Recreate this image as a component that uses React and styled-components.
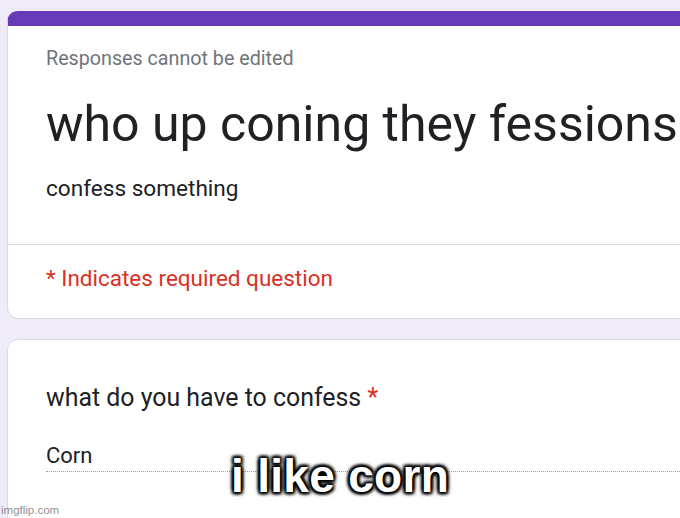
import React from "react";
import styled, { createGlobalStyle } from "styled-components";

const Global = createGlobalStyle`
  html, body {
    margin: 0;
    padding: 0;
    background: #f0ebf8;
  }
  body {
    font-family: Roboto, "Noto Sans", Arial, sans-serif;
  }
`;

const Page = styled.div`
  position: relative;
  width: 680px;
  height: 518px;
  overflow: hidden;
  background: #f0ebf8;
  padding: 11px 0 0 7px;
  box-sizing: border-box;
  display: flex;
  flex-direction: column;
  gap: 20px;
`;

const Card = styled.div`
  width: 720px;
  flex-shrink: 0;
  background: #fff;
  border: 1px solid #dadce0;
  border-radius: 11px;
  box-sizing: border-box;
  ${({ accent }) => accent && `
    border-top: 15px solid #673ab7;
  `}
  ${({ open }) => open && `
    padding-bottom: 80px;
  `}
`;

const Section = styled.div`
  padding: ${({ pad }) => pad || "0 0 0 38px"};
  border-bottom: ${({ divided }) => (divided ? "1px solid #dadce0" : "none")};
`;

const Note = styled.div`
  font-size: 19.7px;
  color: #70757a;
  line-height: 24px;
`;

const Title = styled.h1`
  margin: 0;
  font-size: 50px;
  font-weight: 400;
  color: #202124;
  line-height: 60px;
  white-space: nowrap;
`;

const Desc = styled.div`
  font-size: 22.6px;
  color: #202124;
  line-height: 30px;
`;

const Required = styled.div`
  font-size: 22.5px;
  color: #d93025;
  line-height: 30px;
`;

const Question = styled.div`
  font-size: 24.9px;
  color: #202124;
  line-height: 32px;
`;

const Star = styled.span`
  color: #d93025;
`;

const Answer = styled.div`
  font-size: 22px;
  color: #202124;
  line-height: 30px;
  padding-bottom: 0;
  border-bottom: 1px dotted #9aa0a6;
`;

const Caption = styled.div`
  position: absolute;
  left: 231px;
  top: 448px;
  font-family: "Liberation Sans", Arial, sans-serif;
  font-weight: 700;
  font-size: 46px;
  line-height: 56px;
  color: #fff;
  letter-spacing: 0.3px;
  text-shadow:
    2px 2px 3px #000, -2px -2px 3px #000, 2px -2px 3px #000, -2px 2px 3px #000,
    0 0 4px #000, 0 0 6px rgba(0, 0, 0, 0.6);
`;

const Watermark = styled.div`
  position: absolute;
  left: 1px;
  bottom: 2px;
  font-family: "Liberation Sans", Arial, sans-serif;
  font-size: 11.5px;
  color: rgba(120, 120, 120, 0.85);
`;

export default function App() {
  return (
    <>
      <Global />
      <Page>
        <Card accent>
          <Section pad="21px 0 0 38px">
            <Note>Responses cannot be edited</Note>
          </Section>
          <Section pad="23px 0 0 38px">
            <Title>who up coning they fessions</Title>
          </Section>
          <Section pad="20px 0 40px 38px" divided>
            <Desc>confess something</Desc>
          </Section>
          <Section pad="18px 0 25px 38px">
            <Required>* Indicates required question</Required>
          </Section>
        </Card>
        <Card open>
          <Section pad="42px 0 0 38px">
            <Question>
              what do you have to confess <Star>*</Star>
            </Question>
          </Section>
          <Section pad="27px 0 0 38px">
            <Answer>Corn</Answer>
          </Section>
        </Card>
        <Caption>i like corn</Caption>
        <Watermark>imgflip.com</Watermark>
      </Page>
    </>
  );
}
